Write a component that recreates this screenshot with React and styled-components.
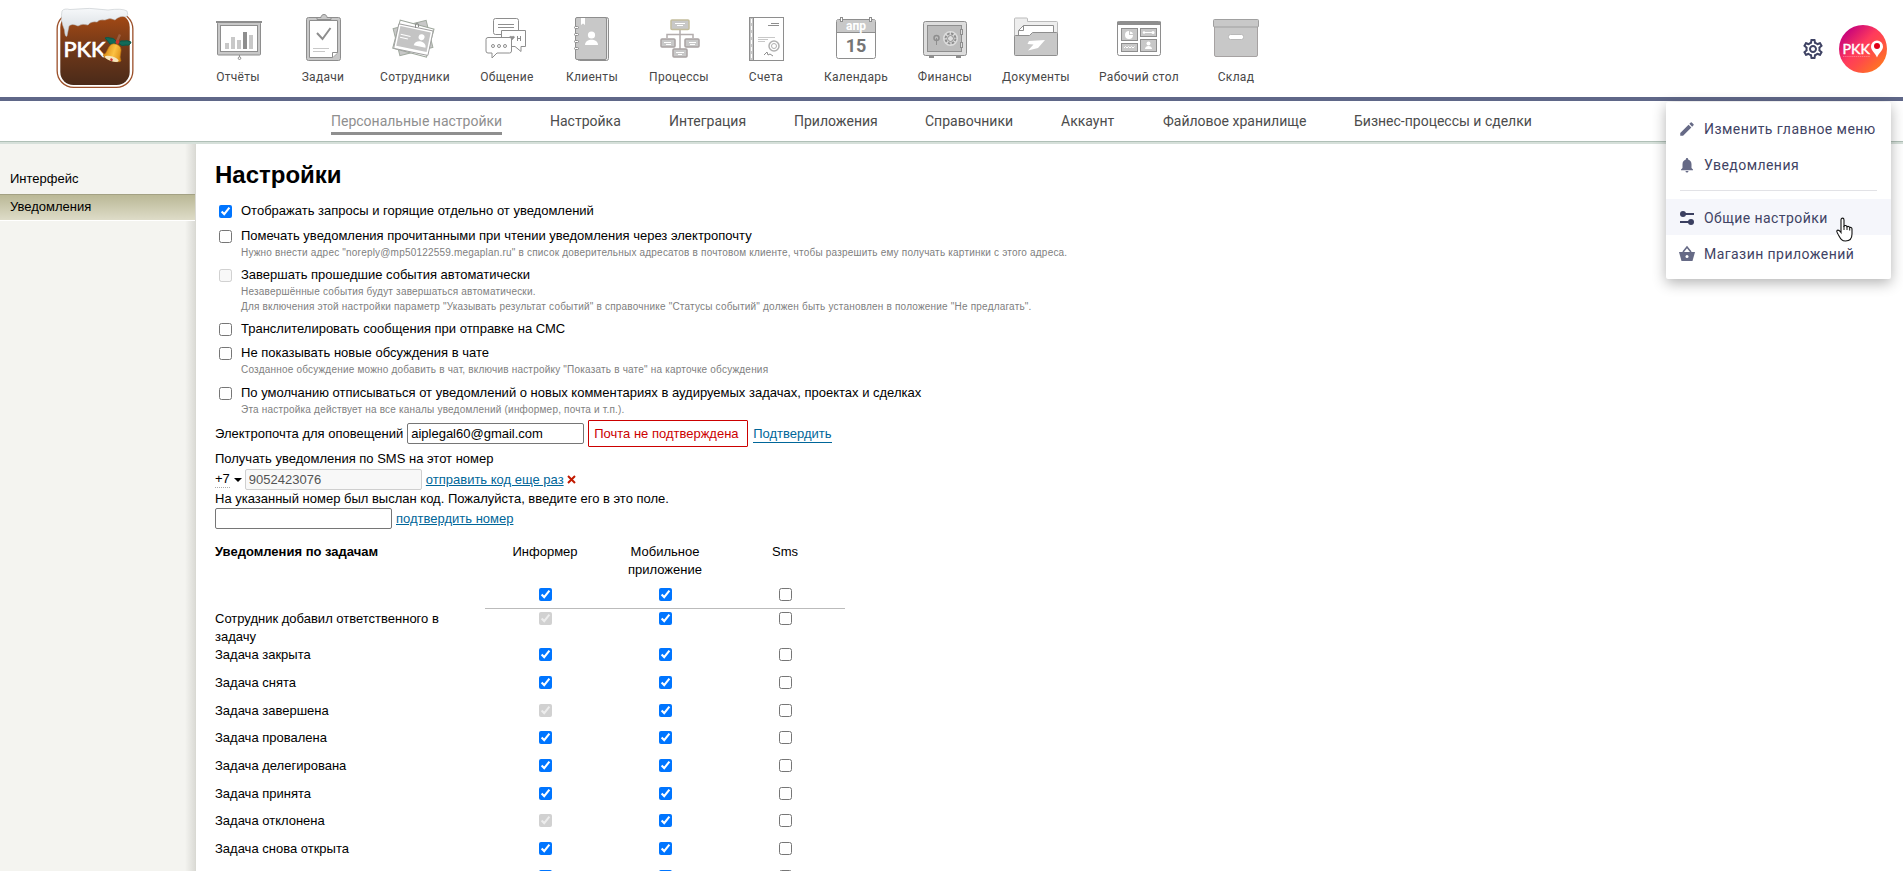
import React from "react";
import styled, { createGlobalStyle } from "styled-components";
import { MdEdit, MdNotifications, MdOutlineSettings } from "react-icons/md";

const Global = createGlobalStyle`
  * { box-sizing: border-box; }
  html, body { margin: 0; background: #fff; }
  body { height: 871px; overflow: hidden; font: 13px/18px "Liberation Sans", Arial, sans-serif; color: #000; }
  input { font: inherit; }
`;

const Page = styled.div`
  position: relative;
  width: 1903px;
  height: 871px;
  overflow: hidden;
  display: flex;
  flex-direction: column;
`;

const Header = styled.header`
  display: flex;
  height: 101px;
  flex: none;
  border-bottom: 4px solid #5f6788;
`;

const LogoBox = styled.div`
  width: 195px;
  padding: 4px 0 0 50px;
`;

const MainNav = styled.nav`
  display: flex;
  flex: 1;
`;

const NavItem = styled.a`
  width: ${(p) => p.$w}px;
  padding-top: 12px;
  display: flex;
  flex-direction: column;
  align-items: center;
  font: 12px/16px Roboto, sans-serif;
  letter-spacing: 0.3px;
  color: #484848;
  white-space: nowrap;
  svg { margin-bottom: 5px; flex: none; }
`;

const HeaderTools = styled.div`
  display: flex;
  align-items: center;
  gap: 14px;
  padding-right: 16px;
  color: #3f4364;
`;

const SubNav = styled.nav`
  height: 43px;
  flex: none;
  display: flex;
  justify-content: flex-start;
  gap: 48px;
  padding: 10px 0 0 331px;
  border-bottom: 2px solid #d6e0da;
  box-shadow: inset 0 -1px 0 #b0c0b7;
  font: 14px/20px Roboto, sans-serif;
  color: #4c4c4c;
`;

const SubNavItem = styled.a`
  height: 24px;
  width: ${(p) => p.$w}px;
  white-space: nowrap;
  color: ${(p) => (p.$active ? "#8f8f8f" : "inherit")};
  border-bottom: ${(p) => (p.$active ? "3px solid #8f8f8f" : "none")};
`;

const Body = styled.div`
  flex: 1;
  min-height: 0;
  display: flex;
`;

const Sidebar = styled.aside`
  width: 196px;
  flex: none;
  padding-top: 22px;
  background: linear-gradient(to right, transparent 185px, rgba(90, 90, 80, 0.16)), #f4f4f0;
  border-right: 1px solid #d9d9d3;
`;

const SideItem = styled.a`
  display: block;
  height: ${(p) => (p.$active ? 27 : 28)}px;
  padding: 3px 10px;
  background: ${(p) => (p.$active ? "linear-gradient(#bab896, #dedcc8)" : "none")};
  border-top: 1px solid ${(p) => (p.$active ? "#a3a184" : "transparent")};
  border-bottom: 1px solid ${(p) => (p.$active ? "#fff" : "transparent")};
`;

const Content = styled.main`
  flex: 1;
  padding: 18px 0 0 19px;
`;

const Title = styled.h1`
  margin: 0 0 13px;
  font-size: 24px;
  line-height: 26px;
`;

const Option = styled.label`
  display: flex;
  height: ${(p) => p.$h}px;
  gap: 9px;
  padding-left: 4px;
`;

const OptionText = styled.div`
  padding-top: 1px;
  line-height: 18px;
  white-space: nowrap;
`;

const Hint = styled.div`
  font-size: 10px;
  line-height: 15px;
  letter-spacing: 0.2px;
  color: #808080;
`;

const Check = styled.input.attrs({ type: "checkbox", readOnly: true })`
  width: 13px;
  height: 13px;
  margin: 4px 0 0;
  flex: none;
`;

const Options = styled.section`
  margin-bottom: 1px;
`;

const FormRow = styled.div`
  display: flex;
  align-items: center;
  height: ${(p) => p.$h}px;
  padding-top: ${(p) => p.$pt || 0}px;
  white-space: nowrap;
`;

const Field = styled.input`
  width: 177px;
  height: 21px;
  margin: ${(p) => p.$m || "0 4px"};
  padding: 1px 3px;
  border: 1px solid ${(p) => (p.disabled ? "#cfcfcf" : "#767676")};
  border-radius: 2px;
  background: ${(p) => (p.disabled ? "#f8f8f8" : "#fff")};
  color: ${(p) => (p.disabled ? "#545454" : "#000")};
`;

const Warning = styled.span`
  height: 27px;
  line-height: 25px;
  padding: 0 7px 0 5px;
  width: 160px;
  margin-right: 5px;
  border: 1px solid #c00;
  border-radius: 1px;
  color: #c00;
`;

const Link = styled.a`
  color: #069;
  text-decoration: ${(p) => (p.$boxed ? "none" : "underline")};
  border-bottom: ${(p) => (p.$boxed ? "1px solid #069" : "none")};
  margin-top: ${(p) => (p.$boxed ? 1 : 0)}px;
  line-height: 16px;
`;

const Prefix = styled.span`
  border-bottom: 1px dotted #aaa;
  line-height: 16px;
`;

const Caret = styled.span`
  border: 4px solid transparent;
  border-top-color: #000;
  border-bottom: 0;
  margin-left: 4px;
`;

const RemoveIcon = styled.svg`
  margin-left: 3px;
`;

const Grid = styled.div`
  display: grid;
  grid-template-columns: 270px 120px 120px 120px;
  margin-top: 14px;
`;

const GridHead = styled.div`
  height: 42px;
  padding: 0 20px;
  text-align: center;
`;

const GridTitle = styled.div`
  font-weight: bold;
`;

const Name = styled.div`
  height: ${(p) => p.$h}px;
  padding: 1px 40px 0 0;
`;

const Cell = styled.div`
  height: ${(p) => p.$h}px;
  border-bottom: ${(p) => (p.$line ? "1px solid #bbb" : "none")};
  display: flex;
  justify-content: center;
  ${Check} { margin-top: 3px; }
`;

const Menu = styled.div`
  position: absolute;
  left: 1666px;
  top: 102px;
  width: 225px;
  height: 177px;
  padding: 8px 0;
  background: #fff;
  border-radius: 2px;
  box-shadow: 0 4px 14px rgba(0, 0, 0, 0.3);
  font: 14px/18px Roboto, sans-serif;
  letter-spacing: 0.44px;
  color: #3f4364;
`;

const MenuItem = styled.div`
  display: flex;
  align-items: center;
  height: 36px;
  padding: 1px 0 0 12px;
  gap: 8px;
  white-space: nowrap;
  background: ${(p) => (p.$hover ? "#f5f6fb" : "none")};
  svg { flex: none; color: #666a86; }
`;

const Divider = styled.div`
  height: 1px;
  margin: 8px 14px;
  background: #e2e2e6;
`;

const Pointer = styled.svg`
  position: absolute;
  left: 1834px;
  top: 217px;
`;

const G = "#c8c8c8";
const D = "#8e8e8e";

const icons = {
  reports: (
    <g>
      <rect x="217.5" y="22.5" width="43" height="32.5" rx="1" fill={G} stroke={D} />
      <rect x="220.5" y="25.5" width="37" height="26" fill="#fff" stroke={D} />
      <path d="M216 22h46" stroke={D} strokeWidth="2" />
      <path d="M225 43h4v6h-4zM231 37h4v12h-4zM237 40h4v9h-4zM249 35h4v14h-4z" fill={G} />
      <path d="M243 32h4v17h-4z" fill={D} />
      <path d="M239.5 55v2" stroke={D} /><circle cx="239.5" cy="58.2" r="1.3" fill="#fff" stroke={D} />
    </g>
  ),
  tasks: (
    <g>
      <rect x="306.5" y="17.5" width="34" height="43" rx="2" fill={G} stroke={D} />
      <path d="M309.5 20.5h28v32.5l-5 4.5h-23z" fill="#fff" stroke={D} />
      <path d="M332.5 57.5v-5h5" fill="#fff" stroke={D} />
      <path d="M317 19.500v-2h4c0-4 6-4 6 0h4v2z" fill={G} stroke={D} />
      <path d="M317 33l5.500 6 8-11" fill="none" stroke={D} strokeWidth="2" />
      <path d="M313 48.500h16M313 51.500h12" stroke={G} />
    </g>
  ),
  staff: (
    <g>
      <rect x="396" y="24" width="34" height="28" transform="rotate(-14 413 38)" fill={G} stroke="#a2aaa0" />
      <rect x="396" y="24" width="35" height="29" transform="rotate(15 413 38)" fill="#fff" stroke="#9da69b" />
      <g transform="rotate(12 413 39)">
        <rect x="396" y="27" width="35" height="25" rx="1" fill="#fff" stroke="#a0a0a0" />
        <rect x="398" y="29" width="31" height="20" fill="#c4c4c4" />
        <circle cx="421" cy="35.500" r="3" fill="#fff" /><path d="M415 45c0-7 12-7 12 0z" fill="#fff" />
        <path d="M400 37h10M400 40h8" stroke="#fff" />
      </g>
      <path d="M415.500 28v-4q1.500-2 3 0v3" fill="none" stroke={D} />
    </g>
  ),
  chat: (
    <g fill="#fff" stroke={D}>
      <rect x="493.500" y="18.500" width="25" height="16" rx="2" />
      <path d="M498 24.500h16M498 27.500h16" />
      <path d="M501.500 30.500h24V46.500H521v5l-6-5h-13.500z" />
      <path d="M512 40l-2.500-2.500q0-2 2.500-1 2.500-1 2.500 1z" fill={D} strokeWidth=".5" />
      <path d="M517.500 36v5M520.500 36v5M517.500 38.500h3" fill="none" />
      <path d="M488 37.500h22q1.500 0 1.500 1.500v12q0 2-2 2H497l-5 5v-5h-4q-2 0-2-2V39.500q0-2 2-2z" />
      <circle cx="493" cy="46" r="1.500" /><circle cx="499" cy="46" r="1.500" /><circle cx="505" cy="46" r="1.500" />
    </g>
  ),
  clients: (
    <g>
      <rect x="577.500" y="17.500" width="31" height="43" rx="2" fill="#eee" stroke={D} />
      <rect x="575.500" y="17.500" width="31" height="42" rx="1.500" fill={G} stroke={D} />
      <path d="M581 18h4v7l-2-1.500-2 1.500z" fill="#fff" />
      <circle cx="591.500" cy="35" r="3.600" fill="#fff" /><path d="M585 45c0-7 13-7 13 0z" fill="#fff" />
      <g fill="#fff" stroke={D}>
        {[26, 33, 40, 47].map((y) => <rect key={y} x="574.500" y={y + 0.5} width="4" height="2" rx="1" />)}
      </g>
    </g>
  ),
  process: (
    <g>
      <path d="M680 30v19M667 38v-3.500h26V38" fill="none" stroke="#b3adad" strokeWidth="1.500" />
      <rect x="671" y="20" width="18" height="9.500" rx="1" fill={G} stroke="#c3bd9d" strokeWidth="1.500" />
      <rect x="661" y="39" width="14" height="8" rx="1" fill={G} stroke="#a9a3a3" strokeWidth="1.500" />
      <rect x="685" y="39" width="14" height="8" rx="1" fill={G} stroke="#a9a3a3" strokeWidth="1.500" />
      <rect x="673" y="49" width="14" height="8" rx="1" fill={G} stroke="#a9a3a3" strokeWidth="1.500" />
      <path d="M675 23.500h10M677 25.500h6M664 42.500h7M666 44.500h5M689 42.500h7M690 44.500h5M676 52.500h8M678 54.500h4" stroke="#fff" />
    </g>
  ),
  bills: (
    <g>
      <rect x="749.500" y="17.500" width="34" height="43" fill="#fff" stroke={D} />
      <path d="M750 18h3v42h-3z" fill={G} /><path d="M753.500 18v42" stroke={D} />
      <path d="M751.500 19v40" stroke="#fff" strokeDasharray="4 3" />
      <path d="M771 23.500h8M768 25.500h11" stroke={D} /><path d="M758 37.500h17M758 39.500h10M758 41.500h7" stroke={G} />
      <circle cx="774" cy="46" r="5" fill="#fff" stroke="#b0b0b0" strokeWidth="1.500" /><circle cx="774" cy="46" r="2.500" fill="none" stroke="#b0b0b0" />
      <path d="M764 55l3-3 1 3 2-1 3 2" fill="none" stroke={D} />
    </g>
  ),
  calendar: (
    <g>
      <rect x="836.500" y="19.500" width="39" height="39" rx="2" fill="#fff" stroke={D} />
      <path d="M837 20h38v12h-38z" fill={G} /><path d="M837 32.500h38" stroke={D} />
      <rect x="840.500" y="17.500" width="2" height="4" fill="#fff" stroke={D} /><rect x="869.500" y="17.500" width="2" height="4" fill="#fff" stroke={D} />
      <text x="856" y="30" textAnchor="middle" fill="#fff" fontFamily="Roboto" fontWeight="700" fontSize="12" letterSpacing="0">апр</text>
      <text x="856" y="52" textAnchor="middle" fill="#757575" fontFamily="Roboto" fontWeight="700" fontSize="18" letterSpacing="0">15</text>
    </g>
  ),
  finance: (
    <g>
      <path d="M929 55h5v3h-5zM956 55h5v3h-5z" fill={D} />
      <rect x="923.500" y="21.500" width="43" height="34" rx="2" fill="#ddd" stroke={D} />
      <rect x="927.500" y="25.500" width="34" height="26" fill="#bcbcbc" stroke={D} />
      <rect x="960.500" y="29.500" width="2" height="5" fill="#ddd" stroke={D} /><rect x="960.500" y="42.500" width="2" height="5" fill="#ddd" stroke={D} />
      <circle cx="936.500" cy="38" r="2.500" fill="none" stroke={D} strokeWidth="1.500" /><path d="M936.500 38v7" stroke={D} />
      <circle cx="950.500" cy="38.500" r="7.500" fill="#ddd" /><circle cx="950.500" cy="38.500" r="5" fill="#ddd" stroke={D} strokeWidth="2" strokeDasharray="2.600 1.300" /><circle cx="950.500" cy="38.500" r="3" fill="none" stroke={D} />
    </g>
  ),
  docs: (
    <g>
      <path d="M1014.500 54V19q0-1 1-1h11q1 0 1 1v2.500h29q1 0 1 1V54z" fill="#eee" stroke="#bbb" />
      <path d="M1018.500 40V30.500l5-5h30V40z" fill="#fff" stroke={D} /><path d="M1018.500 30.500h5v-5" fill="none" stroke={D} />
      <path d="M1014.500 36.500q0-1 1-1h14l3-3h24q1 0 1 1v21q0 1-1 1h-41q-1 0-1-1z" fill={G} stroke={D} />
      <path d="M1045 40l-16 1-1.500 3 6 .5-5.500 6 10-2.500z" fill="#fff" />
    </g>
  ),
  desk: (
    <g>
      <rect x="1117.500" y="21.500" width="43" height="34" rx="2" fill="#fff" stroke={D} />
      <path d="M1117 21.500h44v3.500h-44z" fill={D} />
      <g fill={G} stroke={D}>
        <rect x="1121.500" y="28.500" width="16" height="12" /><rect x="1140.500" y="28.500" width="16" height="8" />
        <rect x="1121.500" y="43.500" width="16" height="8" /><rect x="1140.500" y="39.500" width="16" height="12" />
      </g>
      <path d="M1129 31v4h4a4 4 0 1 1-4-4z" fill="#fff" /><path d="M1130 31.500a3 3 0 0 1 3 2.500h-3z" fill="#fff" />
      <path d="M1124 48l1.500-1.500 1.500 1.500 1.500-1.500 1.500 1.500 1.500-1.500 1.500 1.500 1.500-1.500M1144 32.500h9" fill="none" stroke="#fff" />
      <circle cx="1144" cy="32.500" r="1.200" fill="#fff" /><circle cx="1153" cy="32.500" r="1.500" fill="#fff" />
      <circle cx="1148.500" cy="43.500" r="2" fill="#fff" /><path d="M1145 49c0-4 7-4 7 0z" fill="#fff" />
    </g>
  ),
  stock: (
    <g>
      <path d="M1214.500 26h43v29q0 1.500-1.500 1.500h-40q-1.500 0-1.500-1.500z" fill={G} stroke="#a6a2a2" />
      <rect x="1213.500" y="19.500" width="45" height="7.500" rx="1" fill={G} stroke="#a0a0a0" />
      <rect x="1228.500" y="34.500" width="15" height="5" rx="2" fill="#fff" stroke="#b8b8b8" />
    </g>
  ),
};

const nav = [
  ["Отчёты", 86, 238, "reports"],
  ["Задачи", 84, 323, "tasks"],
  ["Сотрудники", 100, 415, "staff"],
  ["Общение", 84, 507, "chat"],
  ["Клиенты", 86, 592, "clients"],
  ["Процессы", 88, 679, "process"],
  ["Счета", 86, 766, "bills"],
  ["Календарь", 94, 856, "calendar"],
  ["Финансы", 84, 945, "finance"],
  ["Документы", 98, 1036, "docs"],
  ["Рабочий стол", 108, 1139, "desk"],
  ["Склад", 86, 1236, "stock"],
];

const tabs = [
  ["Персональные настройки", 171],
  ["Настройка", 71],
  ["Интеграция", 77],
  ["Приложения", 83],
  ["Справочники", 88],
  ["Аккаунт", 54],
  ["Файловое хранилище", 143],
  ["Бизнес-процессы и сделки", 178],
];

const options = [
  { h: 25, text: "Отображать запросы и горящие отдельно от уведомлений", on: true, hints: [] },
  { h: 39, text: "Помечать уведомления прочитанными при чтении уведомления через электропочту", hints: ['Нужно внести адрес "noreply@mp50122559.megaplan.ru" в список доверительных адресатов в почтовом клиенте, чтобы разрешить ему получать картинки с этого адреса.'] },
  { h: 54, text: "Завершать прошедшие события автоматически", off: true, hints: ["Незавершённые события будут завершаться автоматически.", 'Для включения этой настройки параметр "Указывать результат событий" в справочнике "Статусы событий" должен быть установлен в положение "Не предлагать".'] },
  { h: 24, text: "Транслителировать сообщения при отправке на СМС", hints: [] },
  { h: 40, text: "Не показывать новые обсуждения в чате", hints: ['Созданное обсуждение можно добавить в чат, включив настройку "Показать в чате" на карточке обсуждения'] },
  { h: 36, text: "По умолчанию отписываться от уведомлений о новых комментариях в аудируемых задачах, проектах и сделках", hints: ["Эта настройка действует на все каналы уведомлений (информер, почта и т.п.)."] },
];

const rows = [
  ["Сотрудник добавил ответственного в задачу", 36, true],
  ["Задача закрыта", 28],
  ["Задача снята", 28],
  ["Задача завершена", 27, true],
  ["Задача провалена", 28],
  ["Задача делегирована", 28],
  ["Задача принята", 27],
  ["Задача отклонена", 28, true],
  ["Задача снова открыта", 28],
  ["Задача просрочена", 28],
];

function Logo() {
  return (
    <svg width="90" height="90" viewBox="50 4 90 90">
      <defs>
        <linearGradient id="choc" x1="0" y1="0" x2="0" y2="1"><stop offset="0" stopColor="#a64a14" /><stop offset=".5" stopColor="#6f3819" /><stop offset="1" stopColor="#4a2a19" /></linearGradient>
        <linearGradient id="snow" x1="0" y1="0" x2="0" y2="1"><stop offset="0" stopColor="#f6f8fa" /><stop offset="1" stopColor="#d3d9de" /></linearGradient>
        <linearGradient id="bell" x1="0" y1="0" x2="1" y2="0"><stop offset="0" stopColor="#d98a12" /><stop offset=".5" stopColor="#fcc243" /><stop offset="1" stopColor="#d8870f" /></linearGradient>
      </defs>
      <rect x="56.500" y="12" width="77" height="76" rx="17" fill="#9b4f28" />
      <rect x="57.800" y="13" width="74.400" height="73.800" rx="16" fill="#fff" />
      <rect x="60.300" y="14" width="69.400" height="71" rx="13" fill="url(#choc)" />
      <text x="63.500" y="57" fill="#fff" stroke="#fff" strokeWidth=".7" fontFamily="Lato" fontSize="21" textLength="42" lengthAdjust="spacingAndGlyphs">PKK</text>
      <path d="M62 11Q64 8 70 9.500Q90 7 108 10Q122 8 127 11Q129 15 126 17Q120 15 115 20Q110 17 105 20Q99 19 97 22Q91 21 88 25Q82 23 78 26Q72 23 69 26L67 36Q65 38 64.500 30Q60 20 62 11z" fill="url(#snow)" stroke="#b7bcc0" strokeWidth=".5" />
      <path d="M120 34.500l-3.500 8" stroke="#9c5b3b" strokeWidth="2.500" />
      <path d="M105 38q3-1 5 0 5 0 7 5-3 2-7 1-2-3-5-6zM118 43q3-3 6-2 3-1 7 1-1 4-5 3-4 2-8-2z" fill="#126a58" stroke="#0b5748" />
      <g transform="translate(1 0) rotate(18 113 52) translate(11.300 5.200) scale(.9)">
        <path d="M113 43q7 0 7.500 8 0 5 3 8-2 3-10.500 3t-10.500-3q3-3 3-8 .5-8 7.500-8z" fill="url(#bell)" stroke="#b76d11" strokeWidth=".6" />
        <ellipse cx="113" cy="60" rx="8" ry="2.600" fill="#f7e6bd" /><circle cx="113" cy="61" r="1.500" fill="#c33" />
      </g>
      <circle cx="117.500" cy="42" r="2" fill="#cf3328" />
    </svg>
  );
}

function Avatar() {
  return (
    <svg width="48" height="48" viewBox="0 0 48 48">
      <defs><linearGradient id="av" x1="0" y1="0" x2="1" y2="1"><stop offset=".12" stopColor="#c3007e" /><stop offset=".45" stopColor="#ff3a5c" /><stop offset=".6" stopColor="#ff4a4a" /><stop offset=".9" stopColor="#ff7a1e" /></linearGradient></defs>
      <circle cx="24" cy="24" r="24" fill="url(#av)" />
      <text x="3.500" y="29" fill="#fff" stroke="#fff" strokeWidth=".4" fontFamily="Lato" fontSize="14" textLength="27.500" lengthAdjust="spacingAndGlyphs">PKK</text>
      <path d="M4 31.500h27" stroke="#ffb0b8" strokeWidth="1" strokeDasharray="1.500 .6" opacity=".45" />
      <path d="M38 15.500a6 6 0 0 1 6 6c0 4-4 6-6 11-2-5-6-7-6-11a6 6 0 0 1 6-6z" fill="#fff" /><circle cx="38" cy="21" r="3" fill="#e00018" />
    </svg>
  );
}

export default function App() {
  return (
    <Page>
      <Global />
      <Header>
        <LogoBox><Logo /></LogoBox>
        <MainNav>
          {nav.map(([label, w, cx, icon]) => (
            <NavItem key={label} $w={w}>
              <svg width="52" height="52" viewBox={`${cx - 26} 12 52 52`}>{icons[icon]}</svg>
              {label}
            </NavItem>
          ))}
        </MainNav>
        <HeaderTools><MdOutlineSettings size={24} /><Avatar /></HeaderTools>
      </Header>
      <SubNav>
        {tabs.map(([label, w], i) => <SubNavItem key={label} $w={w} $active={i === 0}>{label}</SubNavItem>)}
      </SubNav>
      <Body>
        <Sidebar>
          <SideItem>Интерфейс</SideItem>
          <SideItem $active>Уведомления</SideItem>
        </Sidebar>
        <Content>
          <Title>Настройки</Title>
          <Options>
            {options.map((o) => (
              <Option key={o.text} $h={o.h}>
                <Check defaultChecked={o.on} disabled={o.off} />
                <OptionText>{o.text}{o.hints.map((t) => <Hint key={t}>{t}</Hint>)}</OptionText>
              </Option>
            ))}
          </Options>
          <FormRow $h={27}>Электропочта для оповещений <Field defaultValue="aiplegal60@gmail.com" /><Warning>Почта не подтверждена</Warning><Link $boxed>Подтвердить</Link></FormRow>
          <FormRow $h={22} $pt={2}>Получать уведомления по SMS на этот номер</FormRow>
          <FormRow $h={21}><Prefix>+7</Prefix><Caret /><Field $m="0 4px 0 3px" disabled defaultValue="9052423076" /><Link>отправить код еще раз</Link>
            <RemoveIcon width="9" height="9" viewBox="0 0 9 9"><path d="M1 1l7 7M8 1L1 8" stroke="#c21a00" strokeWidth="2" /></RemoveIcon>
          </FormRow>
          <FormRow $h={18}>На указанный номер был выслан код. Пожалуйста, введите его в это поле.</FormRow>
          <FormRow $h={21}><Field $m="0 4px 0 0" /><Link>подтвердить номер</Link></FormRow>
          <Grid>
            <GridTitle>Уведомления по задачам</GridTitle>
            <GridHead>Информер</GridHead><GridHead>Мобильное приложение</GridHead><GridHead>Sms</GridHead>
            <Name $h={24} /><Cell $h={24} $line><Check defaultChecked /></Cell><Cell $h={24} $line><Check defaultChecked /></Cell><Cell $h={24} $line><Check /></Cell>
            {rows.map(([label, h, off]) => (
              <React.Fragment key={label}>
                <Name $h={h}>{label}</Name>
                <Cell $h={h}><Check defaultChecked disabled={off} /></Cell>
                <Cell $h={h}><Check defaultChecked /></Cell>
                <Cell $h={h}><Check /></Cell>
              </React.Fragment>
            ))}
          </Grid>
        </Content>
      </Body>
      <Menu>
        <MenuItem><MdEdit size={18} />Изменить главное меню</MenuItem>
        <MenuItem><MdNotifications size={18} />Уведомления</MenuItem>
        <Divider />
        <MenuItem $hover><svg width="18" height="18" viewBox="0 0 18 18"><path d="M4 5h12M2 13h10" stroke="#3b3f60" strokeWidth="2" /><circle cx="5" cy="5" r="3" fill="#3b3f60" /><circle cx="13" cy="13" r="3" fill="#3b3f60" /></svg>Общие настройки</MenuItem>
        <MenuItem><svg width="18" height="18" viewBox="0 0 18 18"><path d="M5 7l4-5 4 5" fill="none" stroke="currentColor" strokeWidth="1.600" /><path d="M1 7h16l-2.500 9h-11z" fill="currentColor" /><circle cx="9" cy="11.500" r="1.500" fill="#fff" /></svg>Магазин приложений</MenuItem>
      </Menu>
      <Pointer width="20" height="26" viewBox="0 0 20 26"><path d="M7 14V3c0-2.500 3-2.500 3 0v6c1-1 2.500-.5 3 .7 1-.8 2.300-.2 2.700.9 1.300-.6 2.300.2 2.300 1.700V17c0 4-2 7-6.500 7-4 0-5-2.500-7-6-1-2-2.500-3.500-1.500-4.500 1.300-1.200 3 .5 4 2z" fill="#fff" stroke="#111" strokeWidth="1.100" /><path d="M10 9v4M13 10v3M15.700 11v2.500" stroke="#111" /></Pointer>
    </Page>
  );
}
